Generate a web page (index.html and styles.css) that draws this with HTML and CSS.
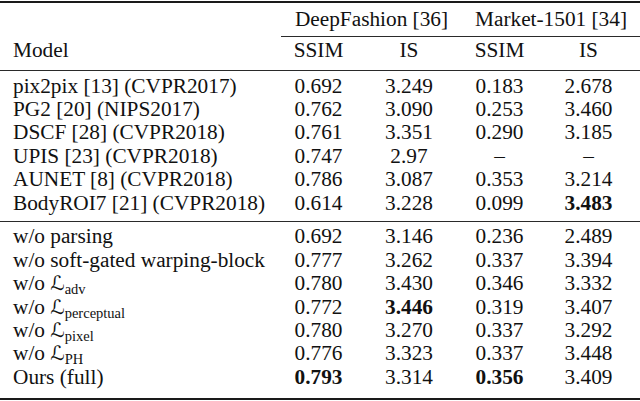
FILE: index.html
```html
<!DOCTYPE html>
<html lang="en">
<head>
<meta charset="utf-8">
<title>Results table</title>
<link rel="stylesheet" href="styles.css">
</head>
<body>
<table class="results">
  <colgroup>
    <col class="c-model">
    <col class="c-num">
    <col class="c-wide">
    <col class="c-num">
    <col class="c-last">
  </colgroup>
  <thead>
    <tr class="group-row">
      <th class="blank"></th>
      <th colspan="2" class="group">DeepFashion [36]</th>
      <th colspan="2" class="group">Market-1501 [34]</th>
    </tr>
    <tr class="metric-row">
      <th class="model">Model</th>
      <th>SSIM</th>
      <th>IS</th>
      <th>SSIM</th>
      <th>IS</th>
    </tr>
  </thead>
  <tbody class="block block-baselines">
    <tr><td class="model">pix2pix [13] (CVPR2017)</td><td>0.692</td><td>3.249</td><td>0.183</td><td>2.678</td></tr>
    <tr><td class="model">PG2 [20] (NIPS2017)</td><td>0.762</td><td>3.090</td><td>0.253</td><td>3.460</td></tr>
    <tr><td class="model">DSCF [28] (CVPR2018)</td><td>0.761</td><td>3.351</td><td>0.290</td><td>3.185</td></tr>
    <tr><td class="model">UPIS [23] (CVPR2018)</td><td>0.747</td><td>2.97</td><td>–</td><td>–</td></tr>
    <tr><td class="model">AUNET [8] (CVPR2018)</td><td>0.786</td><td>3.087</td><td>0.353</td><td>3.214</td></tr>
    <tr><td class="model">BodyROI7 [21] (CVPR2018)</td><td>0.614</td><td>3.228</td><td>0.099</td><td class="best">3.483</td></tr>
  </tbody>
  <tbody class="block block-ablation">
    <tr><td class="model">w/o parsing</td><td>0.692</td><td>3.146</td><td>0.236</td><td>2.489</td></tr>
    <tr><td class="model">w/o soft-gated warping-block</td><td>0.777</td><td>3.262</td><td>0.337</td><td>3.394</td></tr>
    <tr><td class="model">w/o <span class="loss">ℒ</span><sub>adv</sub></td><td>0.780</td><td>3.430</td><td>0.346</td><td>3.332</td></tr>
    <tr><td class="model">w/o <span class="loss">ℒ</span><sub>perceptual</sub></td><td>0.772</td><td class="best">3.446</td><td>0.319</td><td>3.407</td></tr>
    <tr><td class="model">w/o <span class="loss">ℒ</span><sub>pixel</sub></td><td>0.780</td><td>3.270</td><td>0.337</td><td>3.292</td></tr>
    <tr><td class="model">w/o <span class="loss">ℒ</span><sub>PH</sub></td><td>0.776</td><td>3.323</td><td>0.337</td><td>3.448</td></tr>
    <tr><td class="model">Ours (full)</td><td class="best">0.793</td><td>3.314</td><td class="best">0.356</td><td>3.409</td></tr>
  </tbody>
</table>
</body>
</html>
```

FILE: styles.css
```css
html, body {
  margin: 0;
  padding: 0;
  background: #ffffff;
}

.results {
  width: 640px;
  margin-top: 1px;
  border-collapse: separate;
  border-spacing: 0;
  table-layout: fixed;
  font-family: "Liberation Serif", "Times New Roman", serif;
  font-size: 21.3px;
  line-height: 23.4px;
  color: #111111;
}

.c-model { width: 281px; }
.c-num { width: 75px; }
.c-wide { width: 106px; }
.c-last { width: 103px; }

.results th,
.results td {
  padding: 0;
  text-align: center;
  font-weight: normal;
  white-space: nowrap;
}

.results .model {
  text-align: left;
  padding-left: 13px;
}

.group-row th {
  border-top: 2px solid #1a1a1a;
  padding-top: 5.4px;
  padding-bottom: 4.2px;
}

.group-row th.group {
  border-bottom: 1px solid #2a2a2a;
}

.metric-row th {
  padding-top: 2.4px;
  padding-bottom: 7.4px;
  border-bottom: 1px solid #2a2a2a;
}

.block tr:first-child td {
  padding-top: 3.4px;
}

.block-baselines tr:last-child td {
  padding-bottom: 6px;
  border-bottom: 1px solid #2a2a2a;
}

.block-ablation tr:last-child td {
  padding-bottom: 8.5px;
  border-bottom: 2px solid #1a1a1a;
}

.results .best {
  font-weight: bold;
}

.loss {
  font-family: "DejaVu Serif", "DejaVu Sans", serif;
  font-style: italic;
  font-size: 20px;
}

.results sub {
  font-size: 14.5px;
  line-height: 0;
  vertical-align: -3.5px;
}
```
